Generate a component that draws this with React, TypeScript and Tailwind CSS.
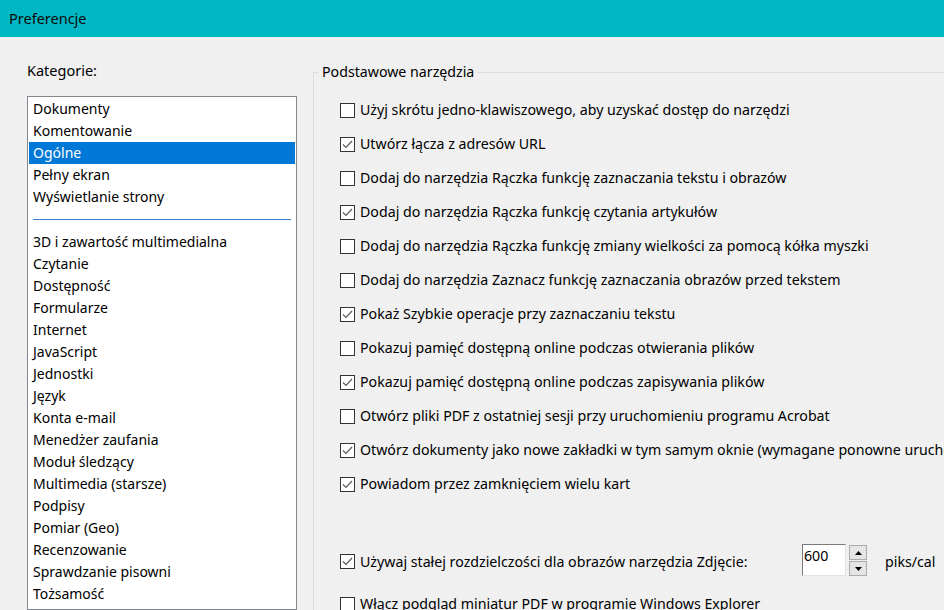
import React from "react";

const font = { fontFamily: '"Noto Sans", "Open Sans", sans-serif' };

const groupA = ["Dokumenty", "Komentowanie", "Ogólne", "Pełny ekran", "Wyświetlanie strony"];
const groupB = [
  "3D i zawartość multimedialna",
  "Czytanie",
  "Dostępność",
  "Formularze",
  "Internet",
  "JavaScript",
  "Jednostki",
  "Język",
  "Konta e-mail",
  "Menedżer zaufania",
  "Moduł śledzący",
  "Multimedia (starsze)",
  "Podpisy",
  "Pomiar (Geo)",
  "Recenzowanie",
  "Sprawdzanie pisowni",
  "Tożsamość",
  "Wyszukiwanie",
];

const options: [string, boolean][] = [
  ["Użyj skrótu jedno-klawiszowego, aby uzyskać dostęp do narzędzi", false],
  ["Utwórz łącza z adresów URL", true],
  ["Dodaj do narzędzia Rączka funkcję zaznaczania tekstu i obrazów", false],
  ["Dodaj do narzędzia Rączka funkcję czytania artykułów", true],
  ["Dodaj do narzędzia Rączka funkcję zmiany wielkości za pomocą kółka myszki", false],
  ["Dodaj do narzędzia Zaznacz funkcję zaznaczania obrazów przed tekstem", false],
  ["Pokaż Szybkie operacje przy zaznaczaniu tekstu", true],
  ["Pokazuj pamięć dostępną online podczas otwierania plików", false],
  ["Pokazuj pamięć dostępną online podczas zapisywania plików", true],
  ["Otwórz pliki PDF z ostatniej sesji przy uruchomieniu programu Acrobat", false],
  ["Otwórz dokumenty jako nowe zakładki w tym samym oknie (wymagane ponowne uruchomienie)", true],
  ["Powiadom przez zamknięciem wielu kart", true],
];

function Box({ checked }: { checked: boolean }) {
  return (
    <div className="w-[15px] h-[15px] border border-[#333333] bg-white flex items-center justify-center shrink-0">
      {checked && (
        <svg width="11" height="9" viewBox="0 0 11 9">
          <path d="M1 4.5 L4 7.5 L10 1" fill="none" stroke="#5a5a5a" strokeWidth="1.2" />
        </svg>
      )}
    </div>
  );
}

function Row({ text, checked }: { text: string; checked: boolean }) {
  return (
    <div className="flex items-center h-[34px] gap-[5px] whitespace-nowrap">
      <Box checked={checked} />
      <span>{text}</span>
    </div>
  );
}

export default function App() {
  return (
    <div className="w-[944px] h-[610px] overflow-hidden bg-[#f0f0f0] text-[14.2px] text-black flex flex-col" style={font}>
      <div className="h-[37px] bg-[#00b7c3] flex items-center pl-[9px] shrink-0">
        <span className="text-[14.5px] text-[#0a0a0a]">Preferencje</span>
      </div>
      <div className="flex flex-1 min-h-0">
        <div className="w-[313px] shrink-0 pl-[27px] pr-[16px] pt-[23px] flex flex-col">
          <div className="h-[36px] leading-[20px] text-[14.5px]">Kategorie:</div>
          <div className="border border-[#828790] bg-white flex-1 pt-[1px] px-[1px] overflow-hidden text-[14px]">
            {groupA.map((t) => (
              <div
                key={t}
                className={
                  "h-[22px] leading-[22px] pl-[4px] whitespace-nowrap " +
                  (t === "Ogólne" ? "bg-[#0078d7] text-white" : "")
                }
              >
                {t}
              </div>
            ))}
            <div className="h-[23px] flex items-center px-[4px]">
              <div className="h-px w-full bg-[#3a7fc4]" />
            </div>
            {groupB.map((t) => (
              <div key={t} className="h-[22px] leading-[22px] pl-[4px] whitespace-nowrap">
                {t}
              </div>
            ))}
          </div>
        </div>
        <fieldset className="mt-[25px] border-l border-t border-[#dcdcdc] flex-1 min-w-0 pl-[26px] pt-[11px] overflow-hidden">
          <legend className="ml-[-21px] px-[3px] leading-[20px]">Podstawowe narzędzia</legend>
          <div className="flex flex-col">
            {options.map(([t, c]) => (
              <Row key={t} text={t} checked={c} />
            ))}
          </div>
          <div className="h-[44px]" />
          <div className="flex items-center whitespace-nowrap h-[34px]">
            <div className="flex items-center gap-[5px] w-[462px]">
              <Box checked={true} />
              <span>Używaj stałej rozdzielczości dla obrazów narzędzia Zdjęcie:</span>
            </div>
            <div className="w-[44px] h-[32px] bg-white border border-t-[#7a7a7a] border-l-[#7a7a7a] border-r-[#e3e3e3] border-b-[#e3e3e3] pl-[1px] leading-[22px] self-start mt-[-1px]">
              600
            </div>
            <div className="flex flex-col ml-[3px] gap-[1px] self-start">
              <div className="w-[18px] h-[15px] bg-[#e5e5e5] border border-[#acacac] flex items-center justify-center">
                <svg width="7" height="4" viewBox="0 0 7 4"><path d="M0 4 L3.5 0 L7 4Z" fill="#000" /></svg>
              </div>
              <div className="w-[18px] h-[15px] bg-[#e5e5e5] border border-[#acacac] flex items-center justify-center">
                <svg width="7" height="4" viewBox="0 0 7 4"><path d="M0 0 L3.5 4 L7 0Z" fill="#000" /></svg>
              </div>
            </div>
            <span className="ml-[18px]">piks/cal</span>
          </div>
          <div className="h-[8px]" />
          <Row text="Włącz podgląd miniatur PDF w programie Windows Explorer" checked={false} />
        </fieldset>
      </div>
    </div>
  );
}
